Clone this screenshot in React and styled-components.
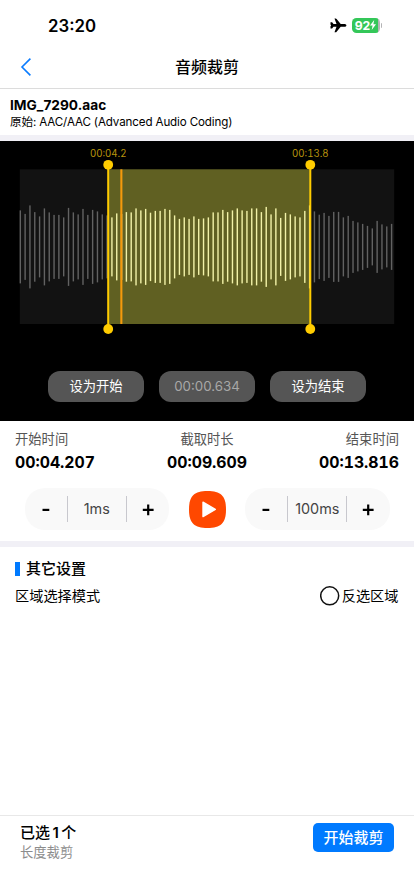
import styled, { createGlobalStyle } from "styled-components";

// distance from the centre line to the tip of each bar, in px
const PEAKS = [
  36.5, 33, 41.5, 34.8, 30.5, 38.5, 34.5, 32, 32, 29.5, 39, 34.5, 32.5, 38, 32, 37, 35.5, 32.5, 31.5,
  29.5, 33.5, 33, 34.8, 34.5, 38.5, 36.5, 38, 34.2, 36, 36, 38, 37, 31.5, 28, 29.5, 28, 30.5, 28,
  28.5, 29.5, 34.5, 34.5, 37, 34.8, 36.5, 38.5, 36.5, 36, 38.5, 38.5, 34.8, 40, 32.5, 38.5, 29,
  34, 32.5, 30.5, 29.5, 36, 41.5, 35.5, 32.2, 34, 31, 35, 35, 29.5, 31, 26, 24.5, 23, 21, 18.5,
  26, 22.5, 20.5, 23,
];

const SELECTION = { start: 108.2, end: 310.3 };

const TIMES = [
  { label: "开始时间", value: "00:04.207", align: "flex-start" },
  { label: "截取时长", value: "00:09.609", align: "center" },
  { label: "结束时间", value: "00:13.816", align: "flex-end" },
];

function StatusBar() {
  return (
    <Status>
      <Clock>23:20</Clock>
      <StatusIcons>
        <svg width="17" height="15" viewBox="0 0 17 15">
          <path
            d="M16.4 7.4C16.4 8.2 15.5 8.8 14.2 8.8H10.7L6.6 13.8Q6.2 14.3 5.7 14.3H4.5L6.5 8.8H3.5L2.1 10.6H.5V8.2L1.1 7.4L.5 6.6V4.2H2.1L3.5 6H6.5L4.5.5H5.7Q6.2.5 6.6 1L10.7 6H14.2C15.5 6 16.4 6.6 16.4 7.4Z"
            fill="#000"
          />
        </svg>
        <Battery>
          <span>92</span>
          <svg width="6" height="10" viewBox="0 0 6 10">
            <path d="M4.2 0L0 5.6H2.6L1.7 10L6 4.2H3.4Z" fill="#fff" />
          </svg>
        </Battery>
        <BatteryTip />
      </StatusIcons>
    </Status>
  );
}

function Waveform() {
  const { start, end } = SELECTION;

  return (
    <svg width="414" height="200" viewBox="0 141 414 200">
      <rect x="19.8" y="169.3" width="374.4" height="154.7" fill="#121212" />
      <rect x={start} y="169.3" width={end - start} height="154.7" fill="#606022" />
      {PEAKS.map((peak, index) => {
        const x = 20.3 + index * 4.822;
        const selected = x > start && x < end;
        return (
          <rect
            key={index}
            x={x - 0.7}
            y={246.9 - peak}
            width="1.4"
            height={peak * 2}
            fill={selected ? "#f2f2a8" : "#626262"}
          />
        );
      })}
      <rect x="120.3" y="169.3" width="2.1" height="154.7" fill="#f59a0c" />
      {[start, end].map((x) => (
        <g key={x} fill="#ffcc00">
          <rect x={x - 1} y="165" width="2" height="164" />
          <circle cx={x} cy="164.8" r="4.9" />
          <circle cx={x} cy="329" r="4.9" />
        </g>
      ))}
      <Mark x={start} y="156.8">00:04.2</Mark>
      <Mark x={end} y="156.8">00:13.8</Mark>
    </svg>
  );
}

function Stepper({ value }) {
  return (
    <StepperBox>
      <StepButton>
        <svg width="16" height="16" viewBox="0 0 16 16">
          <path d="M4.5 8.9H11.3" stroke="#000" strokeWidth="2.2" />
        </svg>
      </StepButton>
      <StepValue>{value}</StepValue>
      <StepButton>
        <svg width="16" height="16" viewBox="0 0 16 16">
          <path d="M2.8 8.9H13.6M8.2 3.5V14.3" stroke="#000" strokeWidth="2.2" />
        </svg>
      </StepButton>
    </StepperBox>
  );
}

function App() {
  return (
    <Screen>
      <GlobalStyle />
      <StatusBar />

      <NavBar>
        <BackButton>
          <svg width="12" height="20" viewBox="0 0 12 20">
            <path d="M10.4 1.6L2 10L10.4 18.4" fill="none" stroke="#0a7cff" strokeWidth="1.6" />
          </svg>
        </BackButton>
        <Title>音频裁剪</Title>
      </NavBar>

      <FileInfo>
        <FileName>IMG_7290.aac</FileName>
        <FileFormat>原始: AAC/AAC (Advanced Audio Coding)</FileFormat>
      </FileInfo>
      <Divider />

      <Player>
        <Waveform />
        <PlayerActions>
          <PillButton>设为开始</PillButton>
          <PillButton $dim>00:00.634</PillButton>
          <PillButton>设为结束</PillButton>
        </PlayerActions>
      </Player>

      <Times>
        {TIMES.map(({ label, value, align }) => (
          <TimeItem key={label} $align={align}>
            <TimeLabel>{label}</TimeLabel>
            <TimeValue>{value}</TimeValue>
          </TimeItem>
        ))}
      </Times>

      <Controls>
        <Stepper value="1ms" />
        <PlayButton>
          <svg width="37" height="37" viewBox="0 0 37 37">
            <path
              d="M18.5 0C31.5 0 37 4.5 37 18.5S31.5 37 18.5 37S0 32.5 0 18.5S5.5 0 18.5 0Z"
              fill="#ff4800"
            />
            <path d="M14 11.2L26.3 18.4L14 25.6Z" fill="#fff" stroke="#fff" strokeWidth="1.4" strokeLinejoin="round" />
          </svg>
        </PlayButton>
        <Stepper value="100ms" />
      </Controls>
      <Divider />

      <Settings>
        <SectionTitle>其它设置</SectionTitle>
        <SettingRow>
          <span>区域选择模式</span>
          <Radio>
            <svg width="20" height="20" viewBox="0 0 20 20">
              <circle cx="9.7" cy="9.8" r="9" fill="none" stroke="#111" strokeWidth="1.5" />
            </svg>
            反选区域
          </Radio>
        </SettingRow>
      </Settings>

      <Footer>
        <div>
          <Count>已选<b>1</b>个</Count>
          <Mode>长度裁剪</Mode>
        </div>
        <SubmitButton>开始裁剪</SubmitButton>
      </Footer>
    </Screen>
  );
}

export default App;

const GlobalStyle = createGlobalStyle`
  * {
    box-sizing: border-box;
  }

  body {
    margin: 0;
    background-color: #fff;
    font-family: Inter, "Noto Sans CJK SC", sans-serif;
    color: #000;
  }

  button {
    border: 0;
    padding: 0;
    background: none;
    font-family: inherit;
  }

  svg {
    display: block;
    flex-shrink: 0;
  }
`;

const Screen = styled.div`
  width: 414px;
  height: 896px;
  display: flex;
  flex-direction: column;
  overflow: hidden;
`;

const Status = styled.div`
  height: 46px;
  padding: 5px 32px 0 48px;
  display: flex;
  align-items: center;
  justify-content: space-between;
`;

const Clock = styled.div`
  font-size: 16.8px;
  font-weight: 600;
  line-height: 20px;
`;

const StatusIcons = styled.div`
  display: flex;
  align-items: center;
  padding-bottom: 1px;
`;

const Battery = styled.div`
  width: 28px;
  height: 15px;
  margin-left: 5px;
  border-radius: 4.5px;
  background: linear-gradient(to right, #34c759 92%, #b4b4b6 92%);
  display: flex;
  align-items: center;
  justify-content: center;
  color: #fff;
  font-size: 12.2px;
  font-weight: 700;
  line-height: 15px;
`;

const BatteryTip = styled.div`
  width: 1.5px;
  height: 5px;
  margin-left: 1px;
  border-radius: 0 2px 2px 0;
  background-color: #b4b4b6;
`;

const NavBar = styled.div`
  height: 43px;
  display: grid;
  grid-template-columns: 48px 1fr 48px;
  align-items: center;
  border-bottom: 1px solid #dcdcdc;
`;

const BackButton = styled.button`
  padding-left: 20px;
`;

const Title = styled.div`
  text-align: center;
  font-size: 16px;
  font-weight: 500;
  line-height: 24px;
`;

const FileInfo = styled.div`
  height: 46px;
  padding: 7px 10px 0;
`;

const FileName = styled.div`
  font-size: 13.7px;
  font-weight: 700;
  line-height: 18px;
`;

const FileFormat = styled.div`
  font-size: 11.6px;
  letter-spacing: -0.13px;
  line-height: 17px;
`;

const Divider = styled.div`
  height: 6px;
  flex-shrink: 0;
  background-color: #f1f0f6;
`;

const Player = styled.div`
  height: 280px;
  background-color: #000;
`;

const Mark = styled.text`
  fill: #b8930c;
  font-size: 9.7px;
  font-variant-numeric: tabular-nums;
  text-anchor: middle;
`;

const PlayerActions = styled.div`
  display: flex;
  justify-content: center;
  gap: 14.5px;
  padding-top: 30px;
`;

const PillButton = styled.button`
  width: 96.5px;
  height: 31px;
  padding-bottom: 2px;
  border-radius: 12px;
  background-color: #555;
  color: ${({ $dim }) => ($dim ? "#a8a8a8" : "#fff")};
  font-size: 13.3px;
`;

const Times = styled.div`
  height: 57px;
  padding: 8px 15px 0;
  display: grid;
  grid-template-columns: repeat(3, 1fr);
`;

const TimeItem = styled.div`
  display: flex;
  flex-direction: column;
  align-items: ${({ $align }) => $align};
`;

const TimeLabel = styled.div`
  color: #555;
  font-size: 13.3px;
  line-height: 20px;
`;

const TimeValue = styled.div`
  padding-top: 3px;
  font-size: 15.8px;
  font-weight: 650;
  font-variant-numeric: tabular-nums;
  line-height: 22px;
`;

const Controls = styled.div`
  height: 63px;
  padding: 10px 24.5px 0;
  display: flex;
  align-items: flex-start;
  justify-content: space-between;
`;

const StepperBox = styled.div`
  width: 144.5px;
  height: 42px;
  border-radius: 20px;
  background-color: #f9f9f9;
  display: flex;
  align-items: center;
`;

const StepButton = styled.button`
  flex: 1;
  display: flex;
  justify-content: center;
`;

const StepValue = styled.div`
  width: 60px;
  height: 26px;
  border: solid #c8c8ce;
  border-width: 0 1px;
  color: #444;
  font-size: 14.4px;
  line-height: 26px;
  text-align: center;
`;

const PlayButton = styled.button`
  margin-top: 2.5px;
`;

const Settings = styled.div`
  flex: 1;
  padding: 11px 15.5px 0 15px;
`;

const SectionTitle = styled.div`
  display: flex;
  align-items: center;
  gap: 6px;
  font-size: 15px;
  font-weight: 500;
  line-height: 22px;

  &::before {
    content: "";
    width: 5px;
    height: 14px;
    background-color: #007aff;
  }
`;

const SettingRow = styled.div`
  display: flex;
  justify-content: space-between;
  padding-top: 5.5px;
  font-size: 14.2px;
  line-height: 20px;
`;

const Radio = styled.div`
  display: flex;
  align-items: center;
  gap: 2px;
`;

const Footer = styled.div`
  height: 81px;
  padding: 7px 20px 0;
  border-top: 1px solid #e8e8e8;
  display: flex;
  align-items: flex-start;
  justify-content: space-between;
`;

const Count = styled.div`
  font-size: 15px;
  font-weight: 500;
  line-height: 19px;

  b {
    margin: 0 2.5px;
    font-weight: 600;
  }
`;

const Mode = styled.div`
  color: #8c8c8c;
  font-size: 13.3px;
  line-height: 20px;
`;

const SubmitButton = styled.button`
  width: 81px;
  height: 29px;
  padding-bottom: 2px;
  border-radius: 5px;
  background-color: #007aff;
  color: #fff;
  font-size: 15px;
  font-weight: 500;
`;
